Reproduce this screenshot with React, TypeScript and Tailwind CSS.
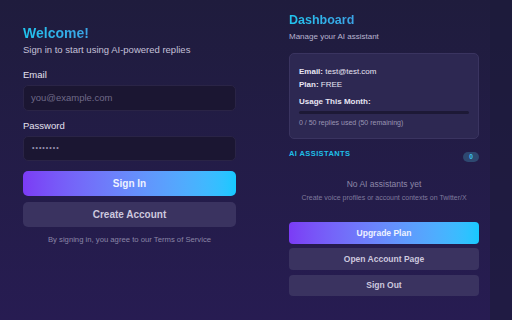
export default function App() {
  return (
    <div
      className="w-[512px] h-[320px] flex overflow-hidden bg-gradient-to-b from-[#1f1c3d] to-[#271c52] text-white"
      style={{ fontFamily: '"Liberation Sans", Arial, sans-serif' }}
    >
      {/* login panel */}
      <div className="w-[256px] h-full pl-[23px] pr-[20px] pt-[23px] flex flex-col">
        <h1 className="text-[14px] leading-[20px] font-bold bg-gradient-to-r from-[#1fc4ee] to-[#3ba3e6] bg-clip-text text-transparent self-start">
          Welcome!
        </h1>
        <p className="mt-[1px] text-[9.5px] leading-[12px] text-[#c4c0d8]">Sign in to start using AI-powered replies</p>

        <label className="mt-[13px] text-[9.5px] leading-[12px] text-[#e4e1ef]">Email</label>
        <div className="mt-[4px] h-[26px] rounded-[5px] bg-[#1b1632] border border-[#2a2446] flex items-center px-[7px] text-[9.5px] text-[#6f6a88]">
          you@example.com
        </div>

        <label className="mt-[9px] text-[9.5px] leading-[12px] text-[#e4e1ef]">Password</label>
        <div className="mt-[4px] h-[25px] rounded-[5px] bg-[#1b1632] border border-[#2a2446] flex items-center px-[8px] text-[7px] tracking-[1px] text-[#9893b0]">
          ••••••••
        </div>

        <button className="mt-[10px] h-[25px] rounded-[5px] bg-gradient-to-r from-[#7b3bf5] to-[#14c9ff] text-[10px] font-bold text-[#eef2ff]">
          Sign In
        </button>
        <button className="mt-[6px] h-[25px] rounded-[5px] bg-[#3a3360] text-[10px] font-bold text-[#cdc8de]">
          Create Account
        </button>
        <p className="mt-[8px] text-center text-[7.7px] leading-[10px] text-[#8a85a6]">
          By signing in, you agree to our Terms of Service
        </p>
      </div>

      {/* dashboard panel */}
      <div className="w-[234px] h-full pl-[33px] pr-[11px] pt-[12px] flex flex-col">
        <h2 className="text-[12.5px] leading-[16px] font-bold bg-gradient-to-r from-[#1fc4ee] to-[#3ba3e6] bg-clip-text text-transparent self-start">
          Dashboard
        </h2>
        <p className="mt-[4px] text-[8px] leading-[10px] text-[#b9b4cf]">Manage your AI assistant</p>

        <div className="mt-[11px] h-[86px] rounded-[5px] bg-[#2d2852] border border-[#3a3460] px-[9px] pt-[13px]">
          <p className="text-[8px] leading-[10px] text-[#e8e5f2]">
            <span className="font-bold">Email:</span> test@test.com
          </p>
          <p className="mt-[3px] text-[8px] leading-[10px] text-[#e8e5f2]">
            <span className="font-bold">Plan:</span> FREE
          </p>
          <p className="mt-[7px] text-[8px] leading-[10px] font-bold text-[#e8e5f2]">Usage This Month:</p>
          <div className="mt-[4px] h-[3px] rounded-full bg-[#1d1936]" />
          <p className="mt-[4px] text-[7px] leading-[10px] text-[#9a95b3]">0 / 50 replies used (50 remaining)</p>
        </div>

        <div className="mt-[10px] flex items-start justify-between">
          <span className="text-[7.5px] leading-[10px] font-bold tracking-[0.4px] text-[#1fbfe8]">AI ASSISTANTS</span>
          <span className="mt-[3px] h-[10px] w-[16px] rounded-full bg-[#2e4870] text-[6.5px] font-bold text-[#3bc6f0] flex items-center justify-center">
            0
          </span>
        </div>

        <p className="mt-[17px] text-center text-[8.5px] leading-[10px] text-[#8d88a8]">No AI assistants yet</p>
        <p className="mt-[4px] text-center text-[7px] leading-[9px] text-[#7f7a9c]">
          Create voice profiles or account contexts on Twitter/X
        </p>

        <button className="mt-[20px] h-[22px] rounded-[4px] bg-gradient-to-r from-[#7b3bf5] to-[#14c9ff] text-[8.5px] font-bold text-[#eef2ff]">
          Upgrade Plan
        </button>
        <button className="mt-[4px] h-[22px] rounded-[4px] bg-[#3a3360] text-[8.5px] font-bold text-[#cdc8de]">
          Open Account Page
        </button>
        <button className="mt-[5px] h-[21px] rounded-[4px] bg-[#3a3360] text-[8.5px] font-bold text-[#cdc8de]">
          Sign Out
        </button>
      </div>

      <div className="flex-1 h-full bg-[#1d1a3a]/60" />
    </div>
  )
}
